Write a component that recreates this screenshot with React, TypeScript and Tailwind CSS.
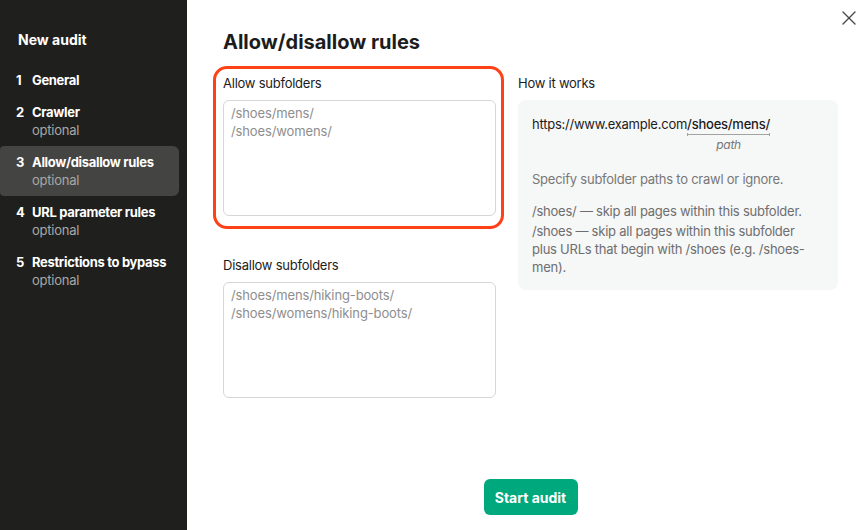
import React from 'react';
import { X } from 'lucide-react';

const steps = [
  { n: 1, label: 'General', optional: false },
  { n: 2, label: 'Crawler', optional: true },
  { n: 3, label: 'Allow/disallow rules', optional: true, active: true },
  { n: 4, label: 'URL parameter rules', optional: true },
  { n: 5, label: 'Restrictions to bypass', optional: true },
];

const Sidebar = () => (
  <aside className="w-[187px] shrink-0 bg-[#1f201e] text-white pt-[30px]">
    <div className="px-[18px] text-[14px] leading-[20px] font-bold mb-[14px] tracking-normal">New audit</div>
    <ul>
      {steps.map((s) => (
        <li
          key={s.n}
          className={`mr-2 flex px-4 py-[7px] rounded-r-md rounded-l-sm ${s.active ? 'bg-[#444442]' : ''}`}
        >
          <span className="w-4 shrink-0 text-[13px] leading-[18px] font-bold">{s.n}</span>
          <div>
            <div className="whitespace-nowrap text-[13px] leading-[18px] font-bold tracking-[-0.025em]">{s.label}</div>
            {s.optional && <div className="text-[13px] leading-[18px] text-[#a8a8a6]">optional</div>}
          </div>
        </li>
      ))}
    </ul>
  </aside>
);

const Field = ({ label, placeholder }: { label: string; placeholder: string }) => (
  <div className="flex flex-col">
    <label className="text-[13px] leading-[18px] text-[#1c1c1c] mb-2">{label}</label>
    <textarea
      className="h-[116px] w-full resize-none rounded-md border border-[#d6d6d6] bg-white px-[7px] pt-[3px] text-[13px] leading-[18px] tracking-[-0.01em] placeholder:text-[#8e8e8e] outline-none"
      placeholder={placeholder}
    />
  </div>
);

export default function App() {
  return (
    <div
      className="flex h-[530px] w-[862px] overflow-hidden bg-white tracking-[-0.015em]"
      style={{ fontFamily: 'Inter, "Noto Sans", sans-serif' }}
    >
      <Sidebar />
      <main className="relative flex flex-1 flex-col pl-[36px] pr-[24px] pt-[28px] pb-[15px]">
        <button className="absolute left-[650px] top-[6px] text-[#4a4a4a]">
          <X size={24} strokeWidth={1.4} />
        </button>
        <h1 className="text-[20px] leading-[28px] font-bold text-[#1c1c1c] tracking-normal">Allow/disallow rules</h1>

        <div className="mt-[18px] flex gap-[22px]">
          <div className="flex w-[273px] flex-col gap-[40px]">
            <div className="relative">
              <div className="absolute -left-[10px] -right-[8px] -top-[8px] -bottom-[13px] rounded-[14px] border-[3px] border-[#ff4117]" />
              <Field label="Allow subfolders" placeholder={'/shoes/mens/\n/shoes/womens/'} />
            </div>
            <Field
              label="Disallow subfolders"
              placeholder={'/shoes/mens/hiking-boots/\n/shoes/womens/hiking-boots/'}
            />
          </div>

          <div className="flex w-[320px] flex-col">
            <div className="text-[13px] leading-[18px] text-[#1c1c1c] mb-2">How it works</div>
            <div className="rounded-lg bg-[#f6f7f7] px-[14px] pt-[15px] pb-[14px] text-[13px] leading-[18px]">
              <div className="flex text-[#1c1c1c]">
                <span>https://www.example.com</span>
                <span className="flex flex-col items-center">
                  <span className="font-medium">/shoes/mens/</span>
                  <span className="flex h-[3px] w-full items-center border-x border-[#a3a3a3]">
                    <span className="h-px w-full bg-[#a3a3a3]" />
                  </span>
                  <span className="text-[12px] leading-[16px] italic text-[#777] mt-[1px]">path</span>
                </span>
              </div>
              <p className="mt-[17px] text-[#777]">Specify subfolder paths to crawl or ignore.</p>
              <p className="mt-[14px] text-[#6e6e6e]">/shoes/ — skip all pages within this subfolder.</p>
              <p className="mt-[2px] text-[#6e6e6e]">
                /shoes — skip all pages within this subfolder
                <br />
                plus URLs that begin with /shoes (e.g. /shoes-
                <br />
                men).
              </p>
            </div>
          </div>
        </div>

        <div className="mt-auto flex w-[615px] justify-center">
          <button className="h-[36px] w-[94px] rounded-md bg-[#00a97d] text-[14px] font-bold text-white tracking-normal">
            Start audit
          </button>
        </div>
      </main>
    </div>
  );
}
